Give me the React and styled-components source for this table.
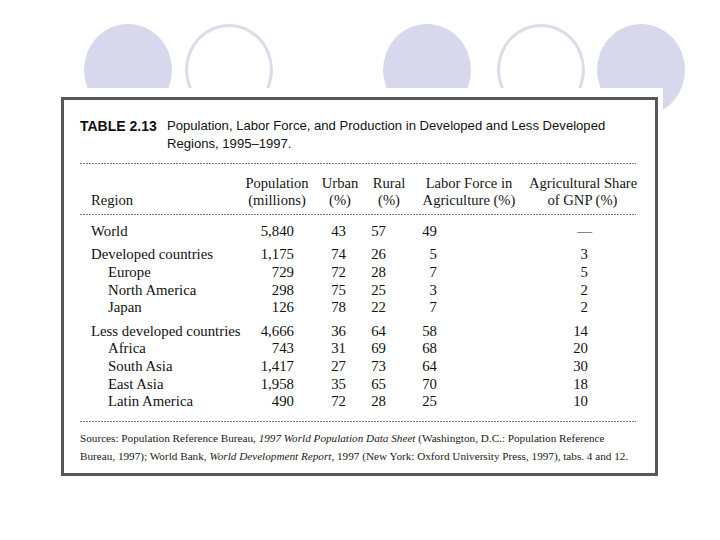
import styled, { createGlobalStyle } from 'styled-components';

const GlobalStyle = createGlobalStyle`
  html, body {
    margin: 0;
    padding: 0;
    background: #ffffff;
  }
`

const Slide = styled.div`
  width: 720px;
  height: 540px;
  background: #ffffff;
  overflow: hidden;
  color: #161616;
`

const CircleRow = styled.div`
  display: flex;
  align-items: flex-start;
  height: 92px;
  padding: 24px 0 0 84px;
`

const Circle = styled.div`
  flex: none;
  box-sizing: border-box;
  width: 88px;
  height: 92px;
  border-radius: 50%;
  margin-left: ${p => p.$gap}px;
  background: ${p => (p.$filled ? '#d8d8ec' : 'transparent')};
  border: ${p => (p.$filled ? 'none' : '3px solid #dcdce9')};
`

const Mat = styled.div`
  position: relative;
  z-index: 1;
  margin: -28px 0 0 50px;
  width: 613px;
  box-sizing: border-box;
  padding: 9px 5px 0 11px;
  background: #ffffff;
`

const Frame = styled.div`
  box-sizing: border-box;
  width: 597px;
  height: 379px;
  border: 3px solid #585858;
  padding: 17px 19px 0 16px;
`

const TitleBlock = styled.div`
  display: flex;
  font-family: "Liberation Sans", Arial, sans-serif;
  line-height: 18px;
  color: #111;
`

const TableLabel = styled.div`
  flex: none;
  width: 87px;
  font-size: 14px;
  font-weight: bold;
`

const Caption = styled.div`
  font-size: 13.1px;
`

const Rule = styled.div`
  height: 1px;
  margin-top: ${p => p.$top}px;
  background-image: linear-gradient(to right, #7a7a7a 60%, transparent 0%);
  background-size: 3px 1px;
  background-repeat: repeat-x;
`

const columns = '163px 68px 58px 40px 120px 107px'

const HeadRow = styled.div`
  display: grid;
  grid-template-columns: ${columns};
  align-items: end;
  margin-top: 11px;
  font-family: "Liberation Serif", "Times New Roman", serif;
  font-size: 14.6px;
  line-height: 17px;
`

const HeadCell = styled.div`
  text-align: ${p => (p.$left ? 'left' : 'center')};
  padding-left: ${p => (p.$left ? 11 : 0)}px;
  white-space: nowrap;
`

const Body = styled.div`
  padding-top: 8px;
  font-family: "Liberation Serif", "Times New Roman", serif;
  font-size: 14.8px;
  line-height: 17.7px;
  color: #111;
`

const Row = styled.div`
  display: grid;
  grid-template-columns: ${columns};
  margin-top: ${p => (p.$group ? 5.5 : 0)}px;
`

const NameCell = styled.div`
  padding-left: ${p => (p.$sub ? 28 : 11)}px;
  white-space: nowrap;
`

const ValueCell = styled.div`
  text-align: right;
  padding-right: ${p => p.$pad}px;
`

const Sources = styled.div`
  margin-top: 7px;
  font-family: "Liberation Serif", "Times New Roman", serif;
  font-size: 11.2px;
  line-height: 18px;
  white-space: nowrap;
  color: #1a1a1a;

  i {
    font-style: italic;
  }
`

const pads = [17, 23, 23, 92, 48]

const rows = [
  { name: 'World', values: ['5,840', '43', '57', '49', '—'] },
  { name: 'Developed countries', values: ['1,175', '74', '26', '5', '3'], group: true },
  { name: 'Europe', values: ['729', '72', '28', '7', '5'], sub: true },
  { name: 'North America', values: ['298', '75', '25', '3', '2'], sub: true },
  { name: 'Japan', values: ['126', '78', '22', '7', '2'], sub: true },
  { name: 'Less developed countries', values: ['4,666', '36', '64', '58', '14'], group: true },
  { name: 'Africa', values: ['743', '31', '69', '68', '20'], sub: true },
  { name: 'South Asia', values: ['1,417', '27', '73', '64', '30'], sub: true },
  { name: 'East Asia', values: ['1,958', '35', '65', '70', '18'], sub: true },
  { name: 'Latin America', values: ['490', '72', '28', '25', '10'], sub: true },
]

const circles = [
  { gap: 0, filled: true },
  { gap: 13, filled: false },
  { gap: 110, filled: true },
  { gap: 26, filled: false },
  { gap: 12, filled: true },
]

function App() {
  return (
    <Slide>
      <GlobalStyle />
      <CircleRow>
        {circles.map((c, i) => (
          <Circle key={i} $gap={c.gap} $filled={c.filled} />
        ))}
      </CircleRow>
      <Mat>
        <Frame>
          <TitleBlock>
            <TableLabel>TABLE 2.13</TableLabel>
            <Caption>
              Population, Labor Force, and Production in Developed and Less Developed<br />
              Regions, 1995–1997.
            </Caption>
          </TitleBlock>
          <Rule $top={10} />
          <HeadRow>
            <HeadCell $left>Region</HeadCell>
            <HeadCell>Population<br />(millions)</HeadCell>
            <HeadCell>Urban<br />(%)</HeadCell>
            <HeadCell>Rural<br />(%)</HeadCell>
            <HeadCell>Labor Force in<br />Agriculture (%)</HeadCell>
            <HeadCell>Agricultural Share<br />of GNP (%)</HeadCell>
          </HeadRow>
          <Rule $top={5} />
          <Body>
            {rows.map(r => (
              <Row key={r.name} $group={r.group}>
                <NameCell $sub={r.sub}>{r.name}</NameCell>
                {r.values.map((v, i) => (
                  <ValueCell key={i} $pad={v === '—' ? pads[i] - 4 : pads[i]}>{v}</ValueCell>
                ))}
              </Row>
            ))}
          </Body>
          <Rule $top={10} />
          <Sources>
            Sources: Population Reference Bureau, <i>1997 World Population Data Sheet</i> (Washington, D.C.: Population Reference<br />
            Bureau, 1997); World Bank, <i>World Development Report,</i> 1997 (New York: Oxford University Press, 1997), tabs. 4 and 12.
          </Sources>
        </Frame>
      </Mat>
    </Slide>
  );
}

export default App;
